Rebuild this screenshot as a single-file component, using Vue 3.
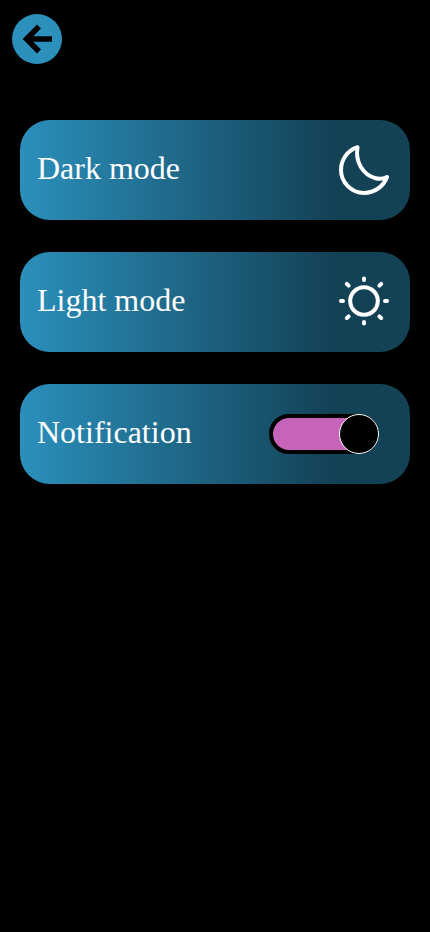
<script setup>
import { ref } from 'vue'

const notifications = ref(true)
</script>

<template>
  <main class="page">
    <header class="bar">
      <button class="back" type="button" aria-label="Back">
        <svg viewBox="0 0 50 50" aria-hidden="true">
          <path d="M27 12.5 L14.6 25 L27 37.5 M14 25 H40" fill="none" stroke="currentColor" stroke-width="5.6" />
        </svg>
      </button>
    </header>
    <section class="list">
      <button class="card" type="button">
        <span class="name">Dark mode</span>
        <svg class="icon" viewBox="0 0 50 50" aria-hidden="true">
          <path d="M18.5 2.2 C8.5 5.5 2 14.5 2 25 C2 37.5 12.5 47.9 25 47.9 C35.5 47.9 44.5 41.5 48 32 C44.5 33.7 40.5 34.2 36.5 33.2 C24 30 16 17 18.5 2.2 Z" fill="none" stroke="currentColor" stroke-width="4" stroke-linejoin="round" />
        </svg>
      </button>
      <button class="card" type="button">
        <span class="name">Light mode</span>
        <svg class="icon" viewBox="0 1 50 50" aria-hidden="true">
          <g fill="none" stroke="currentColor" stroke-width="4" stroke-linecap="round">
            <circle cx="25" cy="25" r="13.8" />
            <path d="M25 2.5 V4 M25 46 V47.5 M2 25 H4 M46 25 H48 M7.8 7.8 L9.6 9.6 M42.2 7.8 L40.4 9.6 M7.8 42.2 L9.6 40.4 M42.2 42.2 L40.4 40.4" />
          </g>
        </svg>
      </button>
      <label class="card toggle">
        <span class="name">Notification</span>
        <input v-model="notifications" class="switch" type="checkbox" role="switch" />
      </label>
    </section>
  </main>
</template>

<style>
body {
  background: #000;
}
</style>

<style scoped>
.page {
  min-height: 100vh;
  box-sizing: border-box;
  background: #000;
  color: #fff;
  font-family: "Liberation Serif", serif;
}

.bar {
  display: flex;
  padding: 14px 12px 0;
}

.back {
  width: 50px;
  height: 50px;
  padding: 0;
  border: 0;
  border-radius: 50%;
  background: #2b90bc;
  color: #000;
  cursor: pointer;
}

.back svg {
  display: block;
}

.list {
  display: flex;
  flex-direction: column;
  gap: 32px;
  padding: 56px 20px 20px;
}

.card {
  display: flex;
  align-items: center;
  justify-content: space-between;
  box-sizing: border-box;
  width: 100%;
  height: 100px;
  padding: 0 21px 0 17px;
  border: 0;
  border-radius: 30px;
  background: linear-gradient(90deg, #2b90bc 0%, #134156 80%);
  color: inherit;
  font-family: inherit;
  font-size: 32px;
  line-height: 40px;
  text-align: left;
  cursor: pointer;
}

.name {
  padding-bottom: 4px;
}

.toggle {
  padding-right: 31px;
}

.icon {
  width: 50px;
  height: 50px;
  overflow: visible;
}

.switch {
  appearance: none;
  display: flex;
  justify-content: flex-start;
  box-sizing: border-box;
  width: 110px;
  height: 40px;
  margin: 0;
  border: 4px solid #000;
  border-radius: 20px;
  background: #444;
  cursor: pointer;
}

.switch::before {
  content: "";
  box-sizing: border-box;
  width: 40px;
  height: 40px;
  margin: -4px;
  border: 1px solid #fff;
  border-radius: 50%;
  background: #000;
}

.switch:checked {
  justify-content: flex-end;
  background: #c564b9;
}
</style>
